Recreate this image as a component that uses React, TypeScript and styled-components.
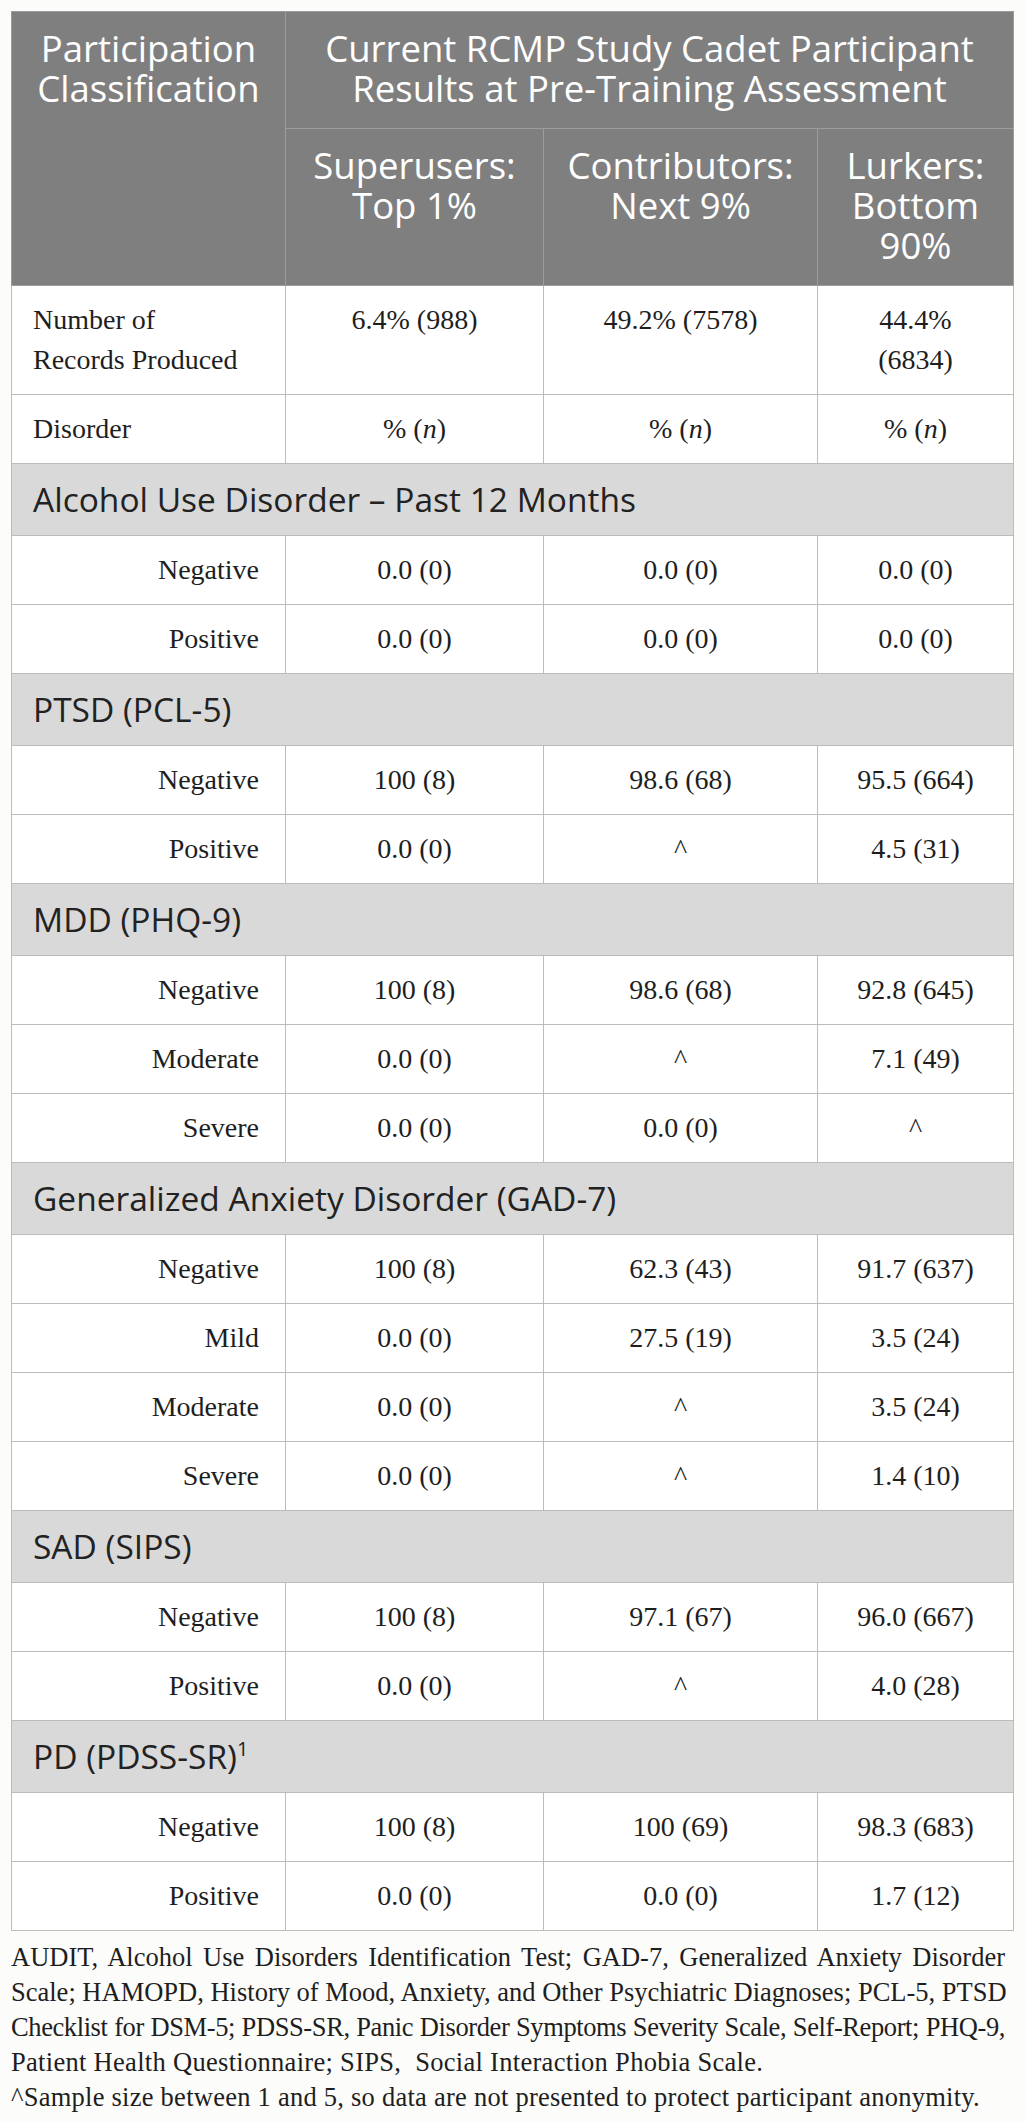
import React from "react";
import styled, { createGlobalStyle } from "styled-components";

const Global = createGlobalStyle`
  html, body { margin: 0; padding: 0; background: #fcfcfa; }
  body { font-family: "Liberation Serif", "Times New Roman", serif; }
`;

const Page = styled.div`
  padding: 11px 12px 0 11px;
  display: flex;
  flex-direction: column;
`;

const Table = styled.table`
  width: 1002px;
  border-collapse: collapse;
  table-layout: fixed;
  background: #ffffff;
  border: 1px solid #bcbcbc;
`;

const HeadCell = styled.th`
  background: #7f7f7f;
  color: #ffffff;
  font-family: "Open Sans", "Liberation Sans", sans-serif;
  font-weight: 400;
  font-size: 36.5px;
  line-height: 40px;
  padding: 16px 12px 20px;
  text-align: center;
  vertical-align: top;
  border: 1px solid #9c9c9c;
`;

const SectionCell = styled.td`
  background: #d9d9d9;
  color: #222222;
  font-family: "Open Sans", "Liberation Sans", sans-serif;
  font-size: 33.5px;
  line-height: 43px;
  padding: 14px 21px;
  text-align: left;
  border: 1px solid #bcbcbc;
  sup {
    font-size: 20px;
    line-height: 0;
    vertical-align: 13px;
  }
`;

const LabelCell = styled.td<{ $indent?: boolean }>`
  color: #1e1e1e;
  font-size: 28px;
  line-height: 40px;
  padding: 14px ${(p) => (p.$indent ? "26px" : "21px")} 14px 21px;
  text-align: ${(p) => (p.$indent ? "right" : "left")};
  vertical-align: top;
  border: 1px solid #bcbcbc;
`;

const DataCell = styled.td`
  color: #1e1e1e;
  font-size: 28px;
  line-height: 40px;
  padding: 14px 18px;
  text-align: center;
  vertical-align: top;
  border: 1px solid #bcbcbc;
`;

const Footer = styled.div`
  margin-top: 9px;
  width: 994px;
  color: #1e1e1e;
  font-size: 26.5px;
  line-height: 35px;
`;

const FootLine = styled.div<{ $justify?: boolean; $track?: number }>`
  white-space: nowrap;
  letter-spacing: ${(p) => p.$track ?? 0}px;
  text-align: ${(p) => (p.$justify ? "justify" : "left")};
  text-align-last: ${(p) => (p.$justify ? "justify" : "left")};
`;

type Row = { label: string; v: [string, string, string] };
type Section = { title: React.ReactNode; rows: Row[] };

const sections: Section[] = [
  {
    title: "Alcohol Use Disorder \u2013 Past 12 Months",
    rows: [
      { label: "Negative", v: ["0.0 (0)", "0.0 (0)", "0.0 (0)"] },
      { label: "Positive", v: ["0.0 (0)", "0.0 (0)", "0.0 (0)"] },
    ],
  },
  {
    title: "PTSD (PCL-5)",
    rows: [
      { label: "Negative", v: ["100 (8)", "98.6 (68)", "95.5 (664)"] },
      { label: "Positive", v: ["0.0 (0)", "^", "4.5 (31)"] },
    ],
  },
  {
    title: "MDD (PHQ-9)",
    rows: [
      { label: "Negative", v: ["100 (8)", "98.6 (68)", "92.8 (645)"] },
      { label: "Moderate", v: ["0.0 (0)", "^", "7.1 (49)"] },
      { label: "Severe", v: ["0.0 (0)", "0.0 (0)", "^"] },
    ],
  },
  {
    title: "Generalized Anxiety Disorder (GAD-7)",
    rows: [
      { label: "Negative", v: ["100 (8)", "62.3 (43)", "91.7 (637)"] },
      { label: "Mild", v: ["0.0 (0)", "27.5 (19)", "3.5 (24)"] },
      { label: "Moderate", v: ["0.0 (0)", "^", "3.5 (24)"] },
      { label: "Severe", v: ["0.0 (0)", "^", "1.4 (10)"] },
    ],
  },
  {
    title: "SAD (SIPS)",
    rows: [
      { label: "Negative", v: ["100 (8)", "97.1 (67)", "96.0 (667)"] },
      { label: "Positive", v: ["0.0 (0)", "^", "4.0 (28)"] },
    ],
  },
  {
    title: (
      <>
        PD (PDSS-SR)<sup>1</sup>
      </>
    ),
    rows: [
      { label: "Negative", v: ["100 (8)", "100 (69)", "98.3 (683)"] },
      { label: "Positive", v: ["0.0 (0)", "0.0 (0)", "1.7 (12)"] },
    ],
  },
];

const PctN = () => (
  <>
    % (<i>n</i>)
  </>
);

export default function App() {
  return (
    <>
      <Global />
      <Page>
        <Table>
          <colgroup>
            <col style={{ width: 274 }} />
            <col style={{ width: 258 }} />
            <col style={{ width: 274 }} />
            <col style={{ width: 196 }} />
          </colgroup>
          <thead>
            <tr>
              <HeadCell rowSpan={2}>Participation Classification</HeadCell>
              <HeadCell colSpan={3}>
                Current RCMP Study Cadet Participant
                <br />
                Results at Pre-Training Assessment
              </HeadCell>
            </tr>
            <tr>
              <HeadCell>Superusers: Top 1%</HeadCell>
              <HeadCell>Contributors: Next 9%</HeadCell>
              <HeadCell>Lurkers: Bottom 90%</HeadCell>
            </tr>
          </thead>
          <tbody>
            <tr>
              <LabelCell>
                Number of
                <br />
                Records Produced
              </LabelCell>
              <DataCell>6.4% (988)</DataCell>
              <DataCell>49.2% (7578)</DataCell>
              <DataCell>
                44.4%
                <br />
                (6834)
              </DataCell>
            </tr>
            <tr>
              <LabelCell>Disorder</LabelCell>
              <DataCell>
                <PctN />
              </DataCell>
              <DataCell>
                <PctN />
              </DataCell>
              <DataCell>
                <PctN />
              </DataCell>
            </tr>
            {sections.map((s, i) => (
              <React.Fragment key={i}>
                <tr>
                  <SectionCell colSpan={4}>{s.title}</SectionCell>
                </tr>
                {s.rows.map((r, j) => (
                  <tr key={j}>
                    <LabelCell $indent>{r.label}</LabelCell>
                    {r.v.map((v, k) => (
                      <DataCell key={k}>{v}</DataCell>
                    ))}
                  </tr>
                ))}
              </React.Fragment>
            ))}
          </tbody>
        </Table>
        <Footer>
          <FootLine $justify>
            AUDIT, Alcohol Use Disorders Identification Test; GAD-7, Generalized Anxiety Disorder
          </FootLine>
          <FootLine $justify>
            Scale; HAMOPD, History of Mood, Anxiety, and Other Psychiatric Diagnoses; PCL-5, PTSD
          </FootLine>
          <FootLine $justify $track={-0.4}>
            Checklist for DSM-5; PDSS-SR, Panic Disorder Symptoms Severity Scale, Self-Report; PHQ-9,
          </FootLine>
          <FootLine $track={0.3}>
            Patient Health Questionnaire; SIPS,&nbsp; Social Interaction Phobia Scale.
          </FootLine>
          <FootLine $track={0.25}>
            ^Sample size between 1 and 5, so data are not presented to protect participant anonymity.
          </FootLine>
        </Footer>
      </Page>
    </>
  );
}
